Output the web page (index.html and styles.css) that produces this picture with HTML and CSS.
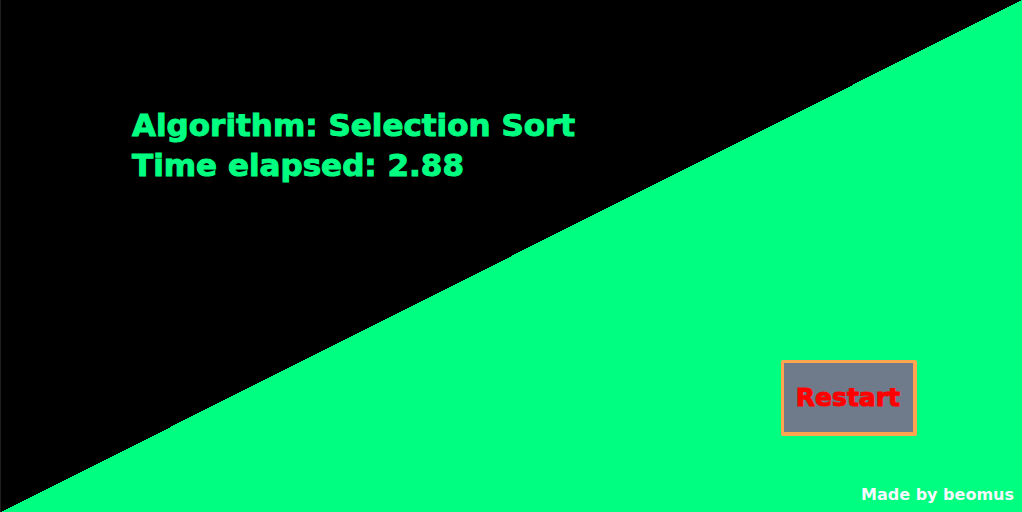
FILE: index.html
```html
<!DOCTYPE html>
<html lang="en">
<head>
<meta charset="utf-8">
<title>Sorting result</title>
<link rel="stylesheet" href="styles.css">
</head>
<body>
<main class="screen">
  <section class="result">
    <p class="line">Algorithm: Selection Sort</p>
    <p class="line">Time elapsed: 2.88</p>
  </section>
  <button class="restart" type="button">Restart</button>
  <footer class="credit">Made by beomus</footer>
</main>
</body>
</html>
```
FILE: styles.css
```css
* {
  box-sizing: border-box;
}

body {
  margin: 0;
  background: #000;
  font-family: "Arial Black", "DejaVu Sans", sans-serif;
  font-weight: 900;
}

.screen {
  display: flex;
  flex-direction: column;
  min-height: 100vh;
  padding: 105px 8px 7px 131px;
  border-left: 1px solid #202020;
  background: linear-gradient(to bottom right, #000 50%, #00ff80 50%);
}

.result {
  color: #00ff80;
  font-size: 31px;
  line-height: 40px;
  -webkit-text-stroke: 1px #00ff80;
}

.line {
  margin: 0;
}

.restart {
  align-self: flex-end;
  margin-top: auto;
  margin-right: 97px;
  padding: 20px 13px 19px 12px;
  border: 3px solid #ffa54f;
  border-right-width: 4px;
  border-bottom-width: 4px;
  border-radius: 2px;
  background: #6f7b8b;
  color: #f00;
  font: inherit;
  font-size: 25px;
  line-height: 30px;
  -webkit-text-stroke: 1px #f00;
}

.credit {
  align-self: flex-end;
  margin-top: 49px;
  color: #f8f8ff;
  font-size: 16px;
  line-height: 20px;
}
```
